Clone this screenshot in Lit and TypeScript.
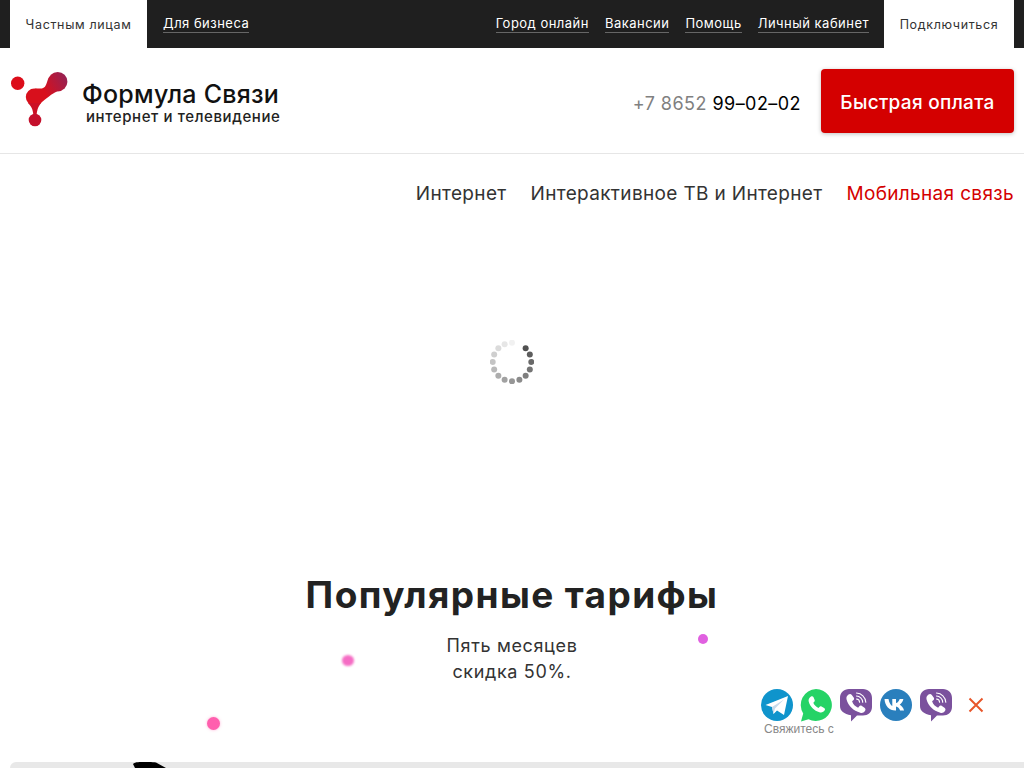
import { LitElement, html, css, svg } from "lit";
import { customElement } from "lit/decorators.js";

const dots = Array.from({ length: 15 }, (_, i) => {
  const a = (i * 22.5 - 45) * Math.PI / 180;
  return { x: 22 + 19.3 * Math.cos(a), y: 22 + 19.3 * Math.sin(a), o: Math.max(0.07, .85 - i * .056) };
});

@customElement("app-root")
export class AppRoot extends LitElement {
  static styles = css`
    :host { display: block; position: relative; height: 768px; overflow: hidden; background: #fff; font-family: Inter, "Noto Sans", sans-serif; color: #222; }
    a { color: inherit; text-decoration: none; }
    .top { height: 48px; background: #1f1f1f; padding: 0 10px; display: flex; align-items: stretch; justify-content: space-between; color: #fff; font-size: 13px; letter-spacing: .48px; }
    .group { display: flex; align-items: center; }
    .tab { align-self: stretch; background: #fff; color: #333; display: flex; align-items: center; justify-content: center; font-size: 12.5px; letter-spacing: .65px; }
    .tab.l { width: 137px; }
    .tab.r { width: 130px; margin-left: 15px; }
    .ul { border-bottom: 1px solid #666; line-height: 17px; }
    .biz { margin-left: 16px; }
    .links { display: flex; gap: 16px; }
    .head { height: 105px; border-bottom: 1px solid #e6e6e6; padding: 0 10px 0 11px; display: flex; align-items: center; justify-content: space-between; }
    .logo { display: flex; align-items: center; }
    .logo svg { display: block; }
    .lt { margin-left: 13px; margin-top: 5px; color: #111; }
    .lt1 { font-size: 25px; font-weight: 500; line-height: 26px; letter-spacing: .25px; }
    .lt2 { font-size: 15px; font-weight: 500; line-height: 16px; margin: 2px 0 0 4px; color: #222; letter-spacing: .6px; }
    .right { display: flex; align-items: center; }
    .phone { font-size: 18px; color: #000; margin: 6px 20px 0 0; letter-spacing: .45px; }
    .phone span { color: #808080; }
    .pay { width: 193px; height: 64px; box-sizing: border-box; padding-top: 2px; margin-top: 1px; background: #d40000; color: #fff; border-radius: 4px; display: flex; align-items: center; justify-content: center; font-size: 19px; font-weight: 500; letter-spacing: .3px; box-shadow: 0 1px 4px rgba(0,0,0,.25); }
    nav { display: flex; justify-content: flex-end; gap: 24px; padding: 28px 10px 0; font-size: 19px; line-height: 24px; color: #333; letter-spacing: .34px; }
    nav .on { color: #d40000; }
    .spin { height: 366px; display: flex; justify-content: center; padding-top: 134px; box-sizing: border-box; }
    .spin svg { display: block; }
    h1 { margin: 0; text-align: center; font-size: 37px; line-height: 44px; font-weight: 700; color: #222; letter-spacing: 1.4px; padding-top: 1px; }
    .sub { text-align: center; font-size: 18px; line-height: 26px; margin-top: 16px; color: #333; letter-spacing: .65px; }
    .bar { position: absolute; left: 10px; right: 0; top: 762px; height: 20px; background: #e8e8e8; border-radius: 6px 0 0 0; }
    .blob { position: absolute; left: 123px; top: 0; display: block; }
    .dot { position: absolute; border-radius: 50%; }
    .contact { position: absolute; left: 761px; top: 689px; width: 240px; }
    .icons { display: flex; gap: 8px; align-items: flex-start; }
    .icons svg { display: block; }
    .wa { margin-left: -1px; }
    .close { margin: 8px 0 0 8px; }
    .cap { position: absolute; left: 3px; top: 33px; font: 12px "Liberation Sans", sans-serif; color: #888; }
  `;

  viber() {
    return html`<svg width="32" height="33" viewBox="0 0 32 33"><path d="M9 0h14c5 0 9 3.500 9 9v9c0 5-4 8.500-9 8.500h-6L11 32.500v-6.300C4 25 0 22 0 17V9c0-5.500 4-9 9-9z" fill="#7b519d"/><path d="M8.500 5.500c1.200-1 2.500-.7 3.300.4l1.900 2.600c.7 1 .5 2-.4 2.800l-1.200 1c1 3.100 3 5.200 6 6.400l1-1.300c.8-.9 1.800-1 2.800-.4l2.600 1.800c1.100.8 1.300 2 .5 3.100-1.200 1.600-2.800 2.400-4.700 1.800C13.400 22 8.300 17 6.500 10.300c-.5-2 .5-3.600 2-4.800z" fill="#fff"/><path d="M16.500 4c5 .3 9 4 9.300 9.300M16.500 7c3.300.2 6 3 6.200 6.300M16.500 10c1.800.1 3 1.400 3.100 3.300" fill="none" stroke="#fff" stroke-width="1.100" stroke-linecap="round"/></svg>`;
  }

  render() {
    return html`
      <div class="top">
        <div class="group"><a class="tab l">Частным лицам</a><a class="ul biz">Для бизнеса</a></div>
        <div class="group">
          <div class="links"><a class="ul">Город онлайн</a><a class="ul">Вакансии</a><a class="ul">Помощь</a><a class="ul">Личный кабинет</a></div>
          <a class="tab r">Подключиться</a>
        </div>
      </div>
      <header class="head">
        <div class="logo">
          <svg width="58" height="60" viewBox="0 0 58 60">
            <defs><linearGradient id="g" x1="20" y1="30" x2="56" y2="10" gradientUnits="userSpaceOnUse"><stop offset=".4" stop-color="#d8101c"/><stop offset="1" stop-color="#9a2050"/></linearGradient></defs>
            <circle cx="6.700" cy="12.300" r="6.700" fill="#dc0d1a"/>
            <circle cx="46.700" cy="10.700" r="9.700" fill="url(#g)"/>
            <circle cx="23.300" cy="26" r="8.500" fill="url(#g)"/>
            <path d="M38.500 5.500C35.500 10 36 14.500 33 16.500 31 18 28 17.500 24 17.500L29 33C32 29.500 35.500 27.500 38 25.500 41 22.500 46 20.400 46 20.400Z" fill="url(#g)"/>
            <path d="M17 32C21.500 36.500 22 40 22.500 45L25.500 45C26 40 26.500 36.500 30 32Z" fill="#cc1024"/>
            <circle cx="24" cy="49" r="6.300" fill="#c4102c"/>
          </svg>
          <div class="lt"><div class="lt1">Формула Связи</div><div class="lt2">интернет и телевидение</div></div>
        </div>
        <div class="right">
          <div class="phone"><span>+7 8652</span> 99–02–02</div>
          <a class="pay">Быстрая оплата</a>
        </div>
      </header>
      <nav><a>Интернет</a><a>Интерактивное ТВ и Интернет</a><a class="on">Мобильная связь</a></nav>
      <div class="spin">
        <svg width="44" height="44" viewBox="0 0 44 44">
          ${dots.map(d => svg`<circle cx=${d.x} cy=${d.y} r="3" fill="#333" opacity=${d.o}></circle>`)}
        </svg>
      </div>
      <h1>Популярные тарифы</h1>
      <div class="sub">Пять месяцев<br />скидка 50%.</div>

      <div class="bar"><svg class="blob" width="34" height="6" viewBox="0 0 34 6"><path d="M0 2C1 .8 3 .3 5 .3 8-.2 18-.2 23 .5L33 6H2z" fill="#000"/></svg></div>
      <div class="dot" style="left:207px;top:717px;width:13px;height:13px;background:#ff5fae;box-shadow:0 0 3px rgba(255,95,174,.5)"></div>
      <div class="dot" style="left:342px;top:655px;width:12px;height:11px;background:#f56cc4;filter:blur(1px)"></div>
      <div class="dot" style="left:698px;top:634px;width:10px;height:10px;background:#e060e0"></div>

      <div class="contact">
        <div class="icons">
          <svg width="32" height="32" viewBox="0 0 32 32"><circle cx="16" cy="16" r="16" fill="#0f94cc"/><path d="M4.500 16 27 7l-4 19-7-4.500-3.500 3.500-1.500-7z" fill="#fff"/><path d="M11 18 23 10.500 14 19.500l-1.500 5.500z" fill="#c8daea"/></svg>
          <svg class="wa" width="32" height="33" viewBox="0 0 32 33"><path d="M16 0a16 16 0 1 1-7.500 30.200L1 32.500l2.200-8A16 16 0 0 1 16 0z" fill="#25d366"/><path d="M11 7.500c1-.7 2-.3 2.400.6l1.200 2.700c.4.900.1 1.600-.5 2.200l-.8.800c1 2.300 2.800 4.100 5.200 5.100l.9-1c.6-.6 1.300-.8 2.100-.4l2.600 1.400c.9.500 1.200 1.500.6 2.400-1.200 1.900-3.200 2.600-5.300 1.900-5.200-1.500-9.300-5.600-10.700-10.800-.5-1.900.5-3.600 2.300-4.900z" fill="#fff"/></svg>
          ${this.viber()}
          <svg width="32" height="32" viewBox="0 0 32 32"><circle cx="16" cy="16" r="16" fill="#2a7fbd"/><path d="M4.500 10h4c.7 4 2.400 6.400 3.800 7v-7h3.700v4c1.500-.1 3-1.900 3.700-4h3.700c-.6 2.800-2.300 4.800-3.700 5.800 1.500.8 3.500 2.600 4.400 5.700h-4c-.7-2.200-2.300-3.800-4.100-4v4h-.8C9.500 21.500 4.900 17 4.500 10z" fill="#fff"/></svg>
          ${this.viber()}
          <svg class="close" width="16" height="16" viewBox="0 0 16 16"><path d="M1.500 1.500l13 13M14.500 1.500l-13 13" stroke="#e8562a" stroke-width="2" fill="none"/></svg>
        </div>
        <div class="cap">Свяжитесь с</div>
      </div>
    `;
  }
}
